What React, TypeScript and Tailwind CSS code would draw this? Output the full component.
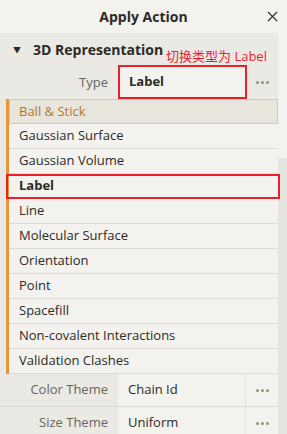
import { X } from 'lucide-react';

const types = [
  'Gaussian Surface',
  'Gaussian Volume',
  'Label',
  'Line',
  'Molecular Surface',
  'Orientation',
  'Point',
  'Spacefill',
  'Non-covalent Interactions',
  'Validation Clashes',
];

function Dots() {
  return (
    <div className="flex items-center gap-[2px]">
      <span className="w-[3px] h-[3px] rounded-full bg-[#9a8f7c]" />
      <span className="w-[3px] h-[3px] rounded-full bg-[#9a8f7c]" />
      <span className="w-[3px] h-[3px] rounded-full bg-[#9a8f7c]" />
    </div>
  );
}

function ParamRow({ label, value }: { label: string; value: string }) {
  return (
    <div className="flex shrink-0 h-[33px] border-b border-[#dedbd3]">
      <div className="w-[118px] bg-[#ebe9e4] flex items-center justify-end pr-[10px] text-[#67655f]">{label}</div>
      <div className="w-[127px] flex items-center pl-[10px] text-[#2b2a27]">{value}</div>
      <div className="flex-1 border-l border-[#e4e1da] flex items-center justify-center">
        <Dots />
      </div>
    </div>
  );
}

export default function App() {
  return (
    <div
      className="w-[287px] h-[434px] bg-[#f3f2ee] overflow-hidden flex flex-col text-[13px]"
      style={{ fontFamily: '"Open Sans", "Noto Sans CJK SC", sans-serif' }}
    >
      {/* Header */}
      <div className="h-[33px] shrink-0 relative flex items-center justify-center">
        <span className="font-bold text-[14px] text-[#2b2a27]">Apply Action</span>
        <X className="absolute right-[6px] top-[8px] w-[17px] h-[17px] text-[#2b2a27]" strokeWidth={1.5} />
      </div>

      <div className="flex shrink-0">
        <div className="w-[278px] shrink-0 flex flex-col relative">
          {/* Section title */}
          <div className="h-[33px] shrink-0 bg-[#ebe9e4] flex items-center">
            <span className="ml-[13px] text-[8px] text-[#2b2a27]">▼</span>
            <span className="ml-[12px] font-bold text-[14px] text-[#2b2a27]">3D Representation</span>
          </div>
          <span className="absolute left-[166px] top-[14px] text-[13px] text-[#f0212e] whitespace-nowrap">切换类型为 Label</span>

          {/* Type */}
          <div className="flex shrink-0 h-[33px]">
            <div className="w-[118px] bg-[#ebe9e4] flex items-center justify-end pr-[10px] text-[#67655f]">Type</div>
            <div className="w-[129px] -mt-px border-2 border-[#e8202a] flex items-center pl-[9px] font-bold text-[#2b2a27]">Label</div>
            <div className="flex-1 bg-[#ebe9e4] flex items-center justify-center">
              <Dots />
            </div>
          </div>

          {/* List */}
          <div className="flex shrink-0 bg-[#e9e7e1]">
            <div className="ml-[6px] w-[3px] bg-[#e8953a]" />
            <div className="flex-1 flex flex-col bg-[#f3f2ee]">
              <div className="h-[25px] bg-[#e8e5dc] border border-[#cfc9bc] flex items-center pl-[9px] text-[#b8761f]">Ball &amp; Stick</div>
              {types.map((t) => (
                <div
                  key={t}
                  className={
                    t === 'Label'
                      ? 'h-[25px] relative flex items-center pl-[10px] font-bold text-[#2b2a27] border-b border-[#dedbd3]'
                      : 'h-[25px] flex items-center pl-[10px] text-[#2b2a27] border-b border-[#dedbd3]'
                  }
                >
                  {t}
                  {t === 'Label' && (
                    <div className="absolute left-[-3px] right-[-2px] top-0 bottom-[-1px] border-2 border-[#e8202a]" />
                  )}
                </div>
              ))}
            </div>
          </div>

          <ParamRow label="Color Theme" value="Chain Id" />
          <ParamRow label="Size Theme" value="Uniform" />
        </div>

        {/* Scrollbar */}
        <div className="flex-1 flex flex-col">
          <div className="h-[125px]" />
          <div className="flex-1 bg-[#e6e4de]" />
        </div>
      </div>
    </div>
  );
}
